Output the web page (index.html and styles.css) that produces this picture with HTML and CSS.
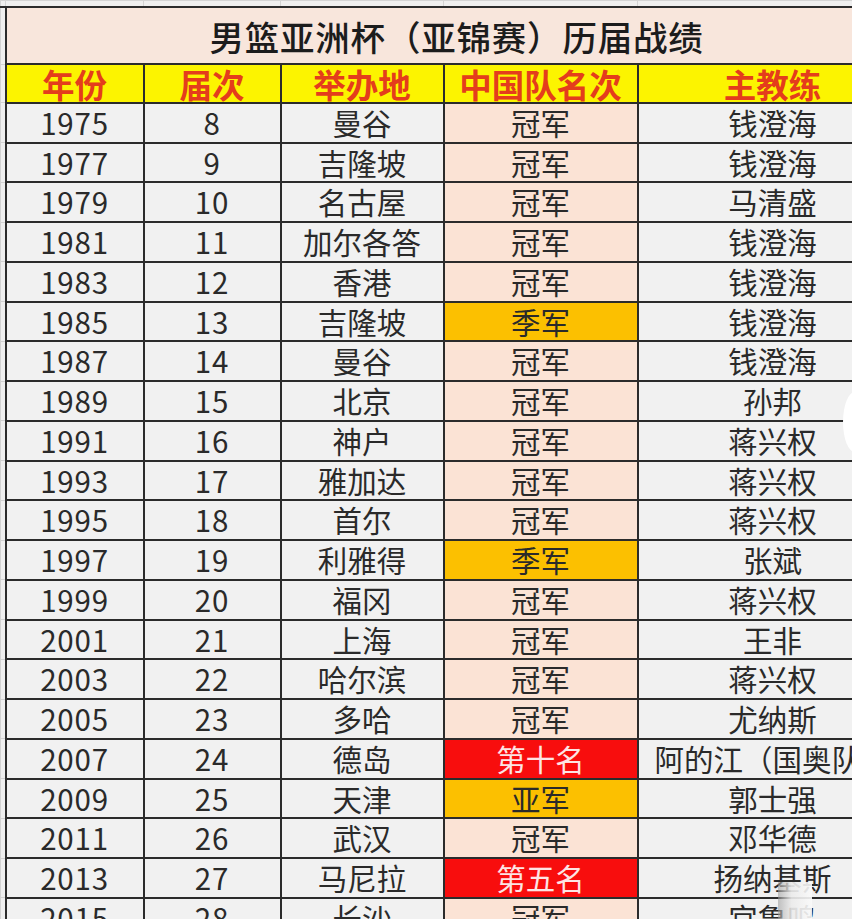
FILE: index.html
```html
<!DOCTYPE html>
<html lang="zh-CN">
<head>
<meta charset="utf-8">
<title>男篮亚洲杯（亚锦赛）历届战绩</title>
<link rel="stylesheet" href="styles.css">
</head>
<body>
<div class="sheet">
<table class="grid">
  <colgroup>
    <col class="c-ghost"><col class="c1"><col class="c2"><col class="c3"><col class="c4"><col class="c5">
  </colgroup>
  <tr class="ghost-row"><td class="g"></td><td class="g"></td><td class="g"></td><td class="g"></td><td class="g"></td><td class="g"></td></tr>
  <tr class="title-row"><td class="g"></td><td class="title" colspan="5">男篮亚洲杯（亚锦赛）历届战绩</td></tr>
  <tr class="head-row"><td class="g"></td><th>年份</th><th>届次</th><th>举办地</th><th>中国队名次</th><th>主教练</th></tr>
  <tr><td class="g"></td><td class="num">1975</td><td class="num">8</td><td>曼谷</td><td class="rank">冠军</td><td>钱澄海</td></tr>
  <tr><td class="g"></td><td class="num">1977</td><td class="num">9</td><td>吉隆坡</td><td class="rank">冠军</td><td>钱澄海</td></tr>
  <tr><td class="g"></td><td class="num">1979</td><td class="num">10</td><td>名古屋</td><td class="rank">冠军</td><td>马清盛</td></tr>
  <tr><td class="g"></td><td class="num">1981</td><td class="num">11</td><td>加尔各答</td><td class="rank">冠军</td><td>钱澄海</td></tr>
  <tr><td class="g"></td><td class="num">1983</td><td class="num">12</td><td>香港</td><td class="rank">冠军</td><td>钱澄海</td></tr>
  <tr><td class="g"></td><td class="num">1985</td><td class="num">13</td><td>吉隆坡</td><td class="rank orange">季军</td><td>钱澄海</td></tr>
  <tr><td class="g"></td><td class="num">1987</td><td class="num">14</td><td>曼谷</td><td class="rank">冠军</td><td>钱澄海</td></tr>
  <tr><td class="g"></td><td class="num">1989</td><td class="num">15</td><td>北京</td><td class="rank">冠军</td><td>孙邦</td></tr>
  <tr><td class="g"></td><td class="num">1991</td><td class="num">16</td><td>神户</td><td class="rank">冠军</td><td>蒋兴权</td></tr>
  <tr><td class="g"></td><td class="num">1993</td><td class="num">17</td><td>雅加达</td><td class="rank">冠军</td><td>蒋兴权</td></tr>
  <tr><td class="g"></td><td class="num">1995</td><td class="num">18</td><td>首尔</td><td class="rank">冠军</td><td>蒋兴权</td></tr>
  <tr><td class="g"></td><td class="num">1997</td><td class="num">19</td><td>利雅得</td><td class="rank orange">季军</td><td>张斌</td></tr>
  <tr><td class="g"></td><td class="num">1999</td><td class="num">20</td><td>福冈</td><td class="rank">冠军</td><td>蒋兴权</td></tr>
  <tr><td class="g"></td><td class="num">2001</td><td class="num">21</td><td>上海</td><td class="rank">冠军</td><td>王非</td></tr>
  <tr><td class="g"></td><td class="num">2003</td><td class="num">22</td><td>哈尔滨</td><td class="rank">冠军</td><td>蒋兴权</td></tr>
  <tr><td class="g"></td><td class="num">2005</td><td class="num">23</td><td>多哈</td><td class="rank">冠军</td><td>尤纳斯</td></tr>
  <tr><td class="g"></td><td class="num">2007</td><td class="num">24</td><td>德岛</td><td class="rank red">第十名</td><td>阿的江（国奥队）</td></tr>
  <tr><td class="g"></td><td class="num">2009</td><td class="num">25</td><td>天津</td><td class="rank orange">亚军</td><td>郭士强</td></tr>
  <tr><td class="g"></td><td class="num">2011</td><td class="num">26</td><td>武汉</td><td class="rank">冠军</td><td>邓华德</td></tr>
  <tr><td class="g"></td><td class="num">2013</td><td class="num">27</td><td>马尼拉</td><td class="rank red">第五名</td><td>扬纳基斯</td></tr>
  <tr><td class="g"></td><td class="num">2015</td><td class="num">28</td><td>长沙</td><td class="rank">冠军</td><td>宫鲁鸣</td></tr>
</table>
<div class="glare-right"></div>
<div class="glare-bottom"></div>
</div>
</body>
</html>
```
FILE: styles.css
```css
html, body {
  margin: 0;
  padding: 0;
  background: #f0f0f0;
  overflow: hidden;
}

.sheet {
  position: relative;
  width: 852px;
  height: 919px;
  overflow: hidden;
}

.grid {
  border-collapse: collapse;
  table-layout: fixed;
  width: 907px;
  font-family: "Noto Sans CJK SC", "Noto Sans", sans-serif;
  color: #2a2a2a;
  background: #f1f1f1;
}

.c-ghost { width: 5px; }
.c1 { width: 138px; }
.c2 { width: 137px; }
.c3 { width: 163px; }
.c4 { width: 194px; }
.c5 { width: 270px; }

.grid td, .grid th {
  border: 2px solid #2b2b2b;
  padding: 0;
  text-align: center;
  vertical-align: middle;
  white-space: nowrap;
  line-height: 1;
  font-size: 29.5px;
  height: 37.75px;
}

.grid td.g {
  border: 1px solid #d2d2d2;
  border-right: 2px solid #2b2b2b;
  background: #efefef;
}

.ghost-row td, .ghost-row td.g {
  height: 5px;
  border: 1px solid #d4d4d4;
  border-bottom: 2px solid #2b2b2b;
  background: #efefef;
}

.ghost-row td:first-child {
  border-right: 1px solid #d4d4d4;
}

.title-row td.title {
  height: 53px;
  background: #f8e6dc;
  font-size: 34.5px;
  font-weight: 500;
  color: #1c1c1c;
  letter-spacing: 0.8px;
  padding-top: 2px;
}

.head-row th {
  height: 35px;
  background: #fcf400;
  color: #e43d1c;
  font-size: 32.5px;
  font-weight: 700;
  padding-top: 1px;
}

.num {
  font-size: 28px;
  letter-spacing: 0.8px;
  padding-top: 3px;
}

.rank {
  background: #fbe3d5;
}

.rank.orange {
  background: #fcc000;
}

.rank.red {
  background: #f80d0d;
  color: #fde4e4;
}

.glare-right {
  position: absolute;
  left: 843px;
  top: 392px;
  width: 24px;
  height: 60px;
  border-radius: 50%;
  background: #ffffff;
}

.glare-bottom {
  position: absolute;
  left: 778px;
  top: 882px;
  width: 34px;
  height: 37px;
  background: linear-gradient(to right, rgba(150,150,150,0.55), rgba(235,235,235,0.9) 40%, rgba(250,250,250,0.9));
}
```
